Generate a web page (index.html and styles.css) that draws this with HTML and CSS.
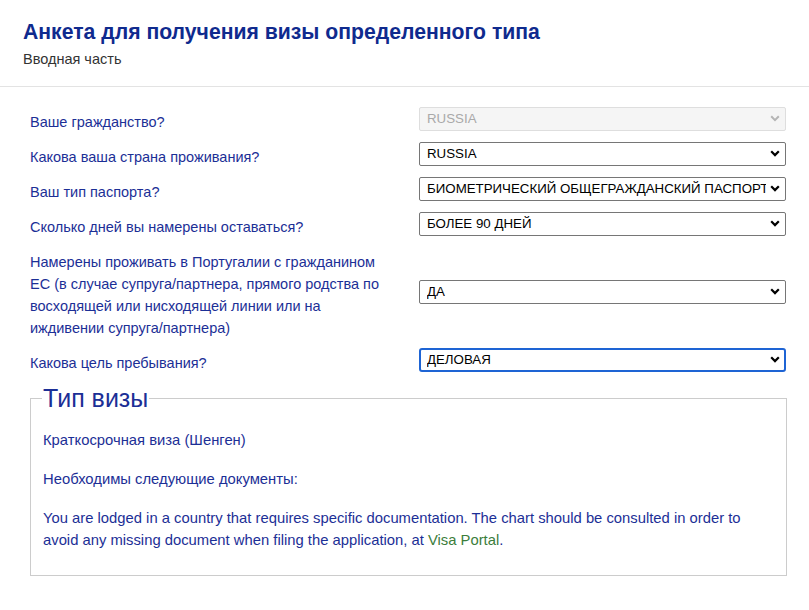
FILE: index.html
```html
<!DOCTYPE html>
<html lang="ru">
<head>
<meta charset="utf-8">
<title>Анкета</title>
<link rel="stylesheet" href="styles.css">
</head>
<body>
<header class="page-header">
  <h1 class="title">Анкета для получения визы определенного типа</h1>
  <div class="subtitle">Вводная часть</div>
</header>
<main class="form">
  <div class="row">
    <label class="label">Ваше гражданство?</label>
    <select class="select" disabled><option>RUSSIA</option></select>
  </div>
  <div class="row">
    <label class="label">Какова ваша страна проживания?</label>
    <select class="select"><option>RUSSIA</option></select>
  </div>
  <div class="row">
    <label class="label">Ваш тип паспорта?</label>
    <select class="select"><option>БИОМЕТРИЧЕСКИЙ ОБЩЕГРАЖДАНСКИЙ ПАСПОРТ</option></select>
  </div>
  <div class="row">
    <label class="label">Сколько дней вы намерены оставаться?</label>
    <select class="select"><option>БОЛЕЕ 90 ДНЕЙ</option></select>
  </div>
  <div class="row">
    <label class="label">Намерены проживать в Португалии с гражданином ЕС (в случае супруга/партнера, прямого родства по восходящей или нисходящей линии или на иждивении супруга/партнера)</label>
    <select class="select"><option>ДА</option></select>
  </div>
  <div class="row">
    <label class="label">Какова цель пребывания?</label>
    <select class="select focused"><option>ДЕЛОВАЯ</option></select>
  </div>
  <fieldset class="visa">
    <legend class="visa-legend">Тип визы</legend>
    <p class="visa-text">Краткосрочная виза (Шенген)</p>
    <p class="visa-text">Необходимы следующие документы:</p>
    <p class="visa-text">You are lodged in a country that requires specific documentation. The chart should be consulted in order to avoid any missing document when filing the application, at <a class="link" href="#">Visa Portal</a>.</p>
  </fieldset>
</main>
</body>
</html>
```
FILE: styles.css
```css
html, body {
  margin: 0;
  padding: 0;
  background: #ffffff;
}
body {
  font-family: "Liberation Sans", Arial, Helvetica, sans-serif;
  color: #1c2f96;
  width: 809px;
}
.page-header {
  padding: 19px 23px 18px 23px;
  border-bottom: 1px solid #e3e3e3;
}
.title {
  margin: 0;
  font-size: 21.2px;
  line-height: 26px;
  font-weight: bold;
  color: #0f2a8e;
}
.subtitle {
  margin-top: 5px;
  font-size: 14.5px;
  line-height: 18px;
  color: #333333;
}
.form {
  padding: 17px 22px 20px 30px;
}
.row {
  display: grid;
  grid-template-columns: 389px 1fr;
  align-items: center;
  margin-bottom: 6px;
}
.label {
  font-size: 14.5px;
  line-height: 22px;
  padding-top: 7px;
  padding-right: 23px;
  color: #1c2f96;
}
.select {
  -webkit-appearance: none;
  appearance: none;
  box-sizing: border-box;
  width: 367px;
  height: 24px;
  margin: 0;
  padding: 0 19px 0 7px;
  font-family: "Liberation Sans", Arial, Helvetica, sans-serif;
  font-size: 13.3px;
  color: #000000;
  background-color: #ffffff;
  border: 1px solid #767676;
  border-radius: 2px;
  background-image: url("data:image/svg+xml;utf8,<svg xmlns='http://www.w3.org/2000/svg' width='10' height='7'><path d='M1.2 1.3 5 5.1 8.8 1.3' fill='none' stroke='black' stroke-width='2.2'/></svg>");
  background-repeat: no-repeat;
  background-position: right 5px center;
  outline: none;
}
.select:disabled {
  background-color: #f5f5f5;
  border-color: #dedede;
  color: #a9a9a9;
  opacity: 1;
  background-image: url("data:image/svg+xml;utf8,<svg xmlns='http://www.w3.org/2000/svg' width='10' height='7'><path d='M1.2 1.3 5 5.1 8.8 1.3' fill='none' stroke='%23b5b5b5' stroke-width='2'/></svg>");
}
.select.focused {
  border: 2px solid #1e64d4;
  border-radius: 3px;
  padding-left: 6px;
  background-position: right 4px center;
}
.visa {
  margin: 10px 0 0 0;
  padding: 0 12px 24px 11px;
  border: 1px solid #cccccc;
}
.visa-legend {
  padding: 0 1px;
  font-size: 25px;
  line-height: 28px;
  color: #1c2f96;
}
.visa-text {
  margin: 17px 0 0 1px;
  font-size: 14.8px;
  line-height: 22px;
  color: #1c2f96;
}
.link {
  color: #3b7d3b;
  text-decoration: none;
}
```
